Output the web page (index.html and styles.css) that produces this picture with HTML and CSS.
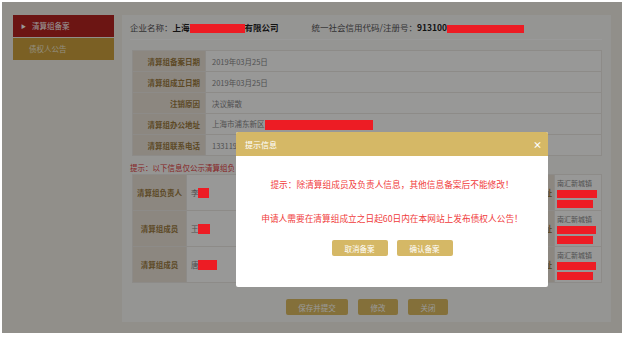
FILE: index.html
```html
<!DOCTYPE html>
<html lang="zh-CN">
<head>
  <meta charset="UTF-8">
  <title>清算组备案</title>
  <link rel="stylesheet" href="styles.css">
</head>
<body>
  <div class="screen">
    <nav class="sidebar">
      <a href="#" class="active"><span class="arrow">&#9654;</span>清算组备案</a>
      <a href="#">债权人公告</a>
    </nav>

    <div class="panel">
      <div class="head">
        <span>企业名称：<b>上海</b><span class="redact r-name"></span><b>有限公司</b></span>
        <span>统一社会信用代码/注册号：<b>913100</b><span class="redact r-code"></span></span>
      </div>

      <table class="info">
        <tr><th>清算组备案日期</th><td>2019年03月25日</td></tr>
        <tr><th>清算组成立日期</th><td>2019年03月25日</td></tr>
        <tr><th>注销原因</th><td>决议解散</td></tr>
        <tr><th>清算组办公地址</th><td>上海市浦东新区<span class="redact r-addr"></span></td></tr>
        <tr><th>清算组联系电话</th><td>133119</td></tr>
      </table>

      <p class="hint">提示：以下信息仅公示清算组负</p>

      <table class="members">
        <tr>
          <th>清算组负责人</th>
          <td class="name">李<span class="redact r-m1"></span></td>
          <th class="addr-label">现居住地址</th>
          <td class="addr">南汇新城镇<span class="redact r-a1"></span><span class="redact r-a2"></span></td>
        </tr>
        <tr>
          <th>清算组成员</th>
          <td class="name">王<span class="redact r-m2"></span></td>
          <th class="addr-label">现居住地址</th>
          <td class="addr">南汇新城镇<span class="redact r-a3"></span><span class="redact r-a2"></span></td>
        </tr>
        <tr>
          <th>清算组成员</th>
          <td class="name">唐<span class="redact r-m3"></span></td>
          <th class="addr-label">现居住地址</th>
          <td class="addr">南汇新城镇<span class="redact r-a3"></span><span class="redact r-a2"></span></td>
        </tr>
      </table>

      <div class="actions">
        <button class="btn wide">保存并提交</button>
        <button class="btn">修改</button>
        <button class="btn">关闭</button>
      </div>
    </div>

    <div class="mask"></div>

    <div class="dialog">
      <div class="dialog-head">
        <span>提示信息</span>
        <span class="close">&times;</span>
      </div>
      <div class="dialog-body">
        <p class="line1">提示：除清算组成员及负责人信息，其他信息备案后不能修改！</p>
        <p class="line2">申请人需要在清算组成立之日起60日内在本网站上发布债权人公告！</p>
        <div class="dialog-actions">
          <button class="btn">取消备案</button>
          <button class="btn">确认备案</button>
        </div>
      </div>
    </div>
  </div>
</body>
</html>
```

FILE: styles.css
```css
* {
  box-sizing: border-box;
}

body {
  margin: 0;
  padding: 2px 0 0 0;
  background-color: #fff;
  font-family: "Noto Sans CJK SC", "Noto Sans", sans-serif;
}

.screen {
  position: relative;
  width: 620px;
  height: 331px;
  margin-left: 2px;
  padding: 13px 11px 0;
  display: flex;
  align-items: flex-start;
  gap: 8px;
  background-color: #f2efe6;
}

/* sidebar */
.sidebar {
  width: 101px;
  display: flex;
  flex-direction: column;
  gap: 1px;
}

.sidebar a {
  height: 22px;
  line-height: 22px;
  padding-left: 16px;
  font-size: 7.5px;
  color: #f3ead2;
  background-color: #cda03c;
  text-decoration: none;
}

.sidebar a.active {
  padding-left: 8px;
  color: #fff;
  background-color: #b52420;
}

.sidebar .arrow {
  font-size: 5px;
  margin-right: 6px;
  vertical-align: 1px;
}

/* main panel */
.panel {
  width: 489px;
  height: 307px;
  padding: 0 9px 0 10px;
  background-color: #f9f8f6;
}

.head {
  height: 25px;
  margin-left: -2px;
  display: flex;
  align-items: center;
  gap: 33px;
  font-size: 8.5px;
  color: #555;
  border-bottom: 1px solid #fff;
}

.head b {
  color: #1e1e1e;
}

.redact {
  position: relative;
  z-index: 11;
  display: inline-block;
  vertical-align: middle;
  background-color: #ed1c24;
}

.r-name { width: 55px; height: 9px; }
.r-code { width: 77px; height: 8px; }
.r-addr { width: 108px; height: 10px; }
.r-m1 { width: 11px; height: 10px; }
.r-m2 { width: 12px; height: 10px; }
.r-m3 { width: 19px; height: 10px; }

table {
  width: 470px;
  border-collapse: collapse;
}

th, td {
  border: 1px solid #ebe8e3;
  font-size: 7.5px;
}

th {
  background-color: #eae1d5;
  color: #9b7a3e;
}

td {
  background-color: #fdfdfc;
  color: #888;
}

.info {
  margin-top: 10px;
}

.info th, .info td {
  height: 21px;
}

.info th {
  width: 73px;
  padding-right: 5px;
  text-align: right;
}

.info td {
  padding-left: 6px;
}

.hint {
  margin: 6px 0 0 -2px;
  line-height: 12px;
  font-size: 7.5px;
  color: #e03a3a;
}

.members th, .members td {
  height: 36px;
}

.members th {
  width: 54px;
}

.members .name {
  width: 314px;
  padding-left: 4px;
}

.members .addr-label {
  width: 55px;
  padding-right: 2px;
  text-align: right;
  white-space: nowrap;
}

.members .addr {
  width: 47px;
  padding: 4px 0 0 2px;
  vertical-align: top;
  line-height: 9px;
  font-size: 7px;
  white-space: nowrap;
}

.members .addr .redact {
  display: block;
  margin-top: 2px;
}

.r-a1 { width: 40px; height: 8px; }
.r-a2 { width: 36px; height: 8px; }
.r-a3 { width: 39px; height: 8px; }

.btn {
  height: 16px;
  padding: 0;
  border: 0;
  border-radius: 2px;
  font-family: inherit;
  font-size: 7.5px;
  color: #fff;
  background-color: #dcbb62;
  cursor: pointer;
}

.actions {
  margin-top: 16px;
  display: flex;
  justify-content: center;
  gap: 10px;
}

.actions .btn {
  width: 40px;
}

.actions .btn.wide {
  width: 62px;
}

/* modal */
.mask {
  position: absolute;
  top: 0;
  left: 0;
  right: 0;
  bottom: 0;
  z-index: 10;
  background-color: rgba(0, 0, 0, 0.4);
}

.dialog {
  position: absolute;
  left: 234px;
  top: 130px;
  z-index: 20;
  width: 312px;
  height: 155px;
  border-radius: 2px;
  background-color: #fff;
  overflow: hidden;
}

.dialog-head {
  height: 24px;
  padding: 0 6px 0 9px;
  display: flex;
  align-items: center;
  justify-content: space-between;
  font-size: 8px;
  color: #fff;
  background-color: #d5b866;
}

.dialog-head .close {
  font-size: 9px;
  font-weight: bold;
}

.dialog-body {
  padding-top: 23px;
  text-align: center;
  font-size: 8.7px;
  color: #f03c3c;
}

.dialog-body p {
  margin: 0;
  line-height: 12px;
}

.dialog-body .line2 {
  margin-top: 22px;
}

.dialog-actions {
  margin-top: 15px;
  display: flex;
  justify-content: center;
  gap: 9px;
}

.dialog-actions .btn {
  width: 56px;
  background-color: #d5b866;
}
```
